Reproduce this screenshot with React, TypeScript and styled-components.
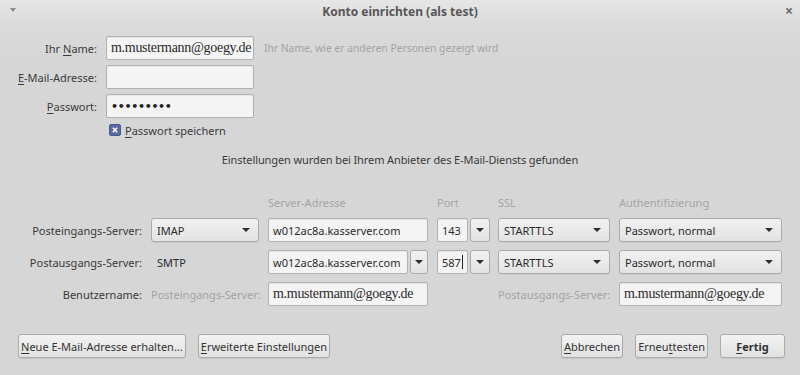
import React from "react";
import styled, { createGlobalStyle } from "styled-components";

const GlobalStyle = createGlobalStyle`
  html, body { margin: 0; padding: 0; }
  body {
    background: #d6d6d6;
    font-family: "Noto Sans", "Open Sans", sans-serif;
    font-size: 11px;
    color: #3a3a3a;
  }
`;

const Window = styled.div`
  width: 800px;
  height: 375px;
  display: flex;
  flex-direction: column;
  background: linear-gradient(#dedede 0px, #d6d6d6 60px, #d6d6d6 100%);
  overflow: hidden;
`;

const TitleBar = styled.div`
  height: 22px;
  display: grid;
  grid-template-columns: 30px 1fr 30px;
  align-items: center;
  background: linear-gradient(#e6e6e6, #dcdcdc);
`;

const MenuTriangle = styled.span`
  justify-self: start;
  margin-left: 10px;
  width: 0;
  height: 0;
  border-left: 3.5px solid transparent;
  border-right: 3.5px solid transparent;
  border-top: 4px solid #8a8a8a;
  margin-top: -2px;
`;

const Title = styled.div`
  text-align: center;
  font-weight: 700;
  font-size: 12px;
  color: #575757;
`;

const CloseX = styled.span`
  justify-self: end;
  margin-right: 7px;
  font-size: 14px;
  font-weight: 700;
  color: #6a6a6a;
  line-height: 1;
`;

const Mn = styled.span`
  text-decoration: underline;
  text-underline-offset: 2px;
`;

const AccountForm = styled.div`
  margin-top: 14px;
  display: grid;
  grid-template-columns: 97px 148px auto;
  column-gap: 9px;
  row-gap: 5px;
  grid-auto-rows: 24px;
  align-items: center;
`;

const Label = styled.div<{ $muted?: boolean }>`
  text-align: right;
  white-space: nowrap;
  color: ${(p) => (p.$muted ? "#a3a3a3" : "#3a3a3a")};
`;

const Field = styled.div<{ $serif?: boolean; $w?: number }>`
  box-sizing: border-box;
  height: 24px;
  ${(p) => (p.$w ? `width: ${p.$w}px; flex: none;` : "")}
  background: #f4f4f4;
  border: 1px solid #b2b2b2;
  border-radius: 2px;
  box-shadow: inset 0 1px 1px rgba(0, 0, 0, 0.06);
  display: flex;
  align-items: center;
  padding: 0 4px;
  white-space: nowrap;
  overflow: hidden;
  font-family: ${(p) =>
    p.$serif
      ? `"Liberation Serif", "DejaVu Serif", serif`
      : `"Noto Sans", "Open Sans", sans-serif`};
  font-size: ${(p) => (p.$serif ? "14px" : "11px")};
  letter-spacing: ${(p) => (p.$serif ? "-0.3px" : "0")};
  color: #2a2a2a;
`;

const Dots = styled.span`
  font-family: "DejaVu Sans", sans-serif;
  font-size: 11px;
  letter-spacing: -0.3px;
  font-weight: 700;
  color: #222;
`;

const Hint = styled.div`
  color: #a3a3a3;
  white-space: nowrap;
  font-size: 10.3px;
  margin-left: 1px;
`;

const CheckRow = styled.div`
  grid-column: 2 / 4;
  display: flex;
  align-items: center;
  gap: 4px;
  margin-left: 3px;
  height: 12px;
  align-self: start;
  margin-top: 1px;
`;

const CheckBox = styled.span`
  box-sizing: border-box;
  width: 12px;
  height: 12px;
  border-radius: 2px;
  background: #5869a3;
  border: 1px solid #4a5a90;
  display: flex;
  align-items: center;
  justify-content: center;
`;

const Message = styled.div`
  margin-top: 5px;
  text-align: center;
  line-height: 16px;
  letter-spacing: -0.1px;
  color: #3a3a3a;
`;

const ServerGrid = styled.div`
  margin-top: 26px;
  display: grid;
  grid-template-columns: 142px 108px 160px 52px 112px 163px;
  column-gap: 9px;
  grid-template-rows: 16px 24px 24px 24px;
  row-gap: 8px;
  align-items: center;
`;

const ColHead = styled.div`
  color: #a5a5a5;
  white-space: nowrap;
`;

const Combo = styled.div`
  box-sizing: border-box;
  height: 24px;
  border: 1px solid #ababab;
  border-radius: 3px;
  background: linear-gradient(#f1f1f1, #e3e3e3);
  box-shadow: 0 1px 0 rgba(0, 0, 0, 0.05);
  display: flex;
  align-items: center;
  justify-content: space-between;
  padding: 0 8px 0 5px;
  color: #2a2a2a;
  white-space: nowrap;
`;

const Arrow = styled.span`
  width: 0;
  height: 0;
  border-left: 4px solid transparent;
  border-right: 4px solid transparent;
  border-top: 4px solid #2e2e2e;
`;

const SplitField = styled.div`
  display: flex;
  gap: 2px;
  height: 24px;
`;

const DropButton = styled.div<{ $w: number }>`
  box-sizing: border-box;
  width: ${(p) => p.$w}px;
  flex: none;
  height: 24px;
  border: 1px solid #ababab;
  border-radius: 3px;
  background: linear-gradient(#f1f1f1, #e3e3e3);
  display: flex;
  align-items: center;
  justify-content: center;
`;

const PlainValue = styled.div`
  padding-left: 6px;
  color: #2a2a2a;
`;

const Caret = styled.span`
  display: inline-block;
  width: 1px;
  height: 14px;
  background: #222;
  margin-left: 1px;
`;

const ButtonBar = styled.div`
  margin-top: auto;
  margin-bottom: 17px;
  padding: 0 15px 0 18px;
  display: flex;
  justify-content: space-between;
`;

const ButtonGroup = styled.div`
  display: flex;
  gap: 12px;
`;

const Button = styled.div<{ $bold?: boolean; $min?: number }>`
  box-sizing: border-box;
  height: 24px;
  padding: 0 2px;
  ${(p) => (p.$min ? `min-width: ${p.$min}px;` : "")}
  border: 1px solid #acacac;
  border-radius: 3px;
  background: linear-gradient(#f3f3f3, #e1e1e1);
  box-shadow: 0 1px 1px rgba(0, 0, 0, 0.08);
  display: flex;
  align-items: center;
  justify-content: center;
  white-space: nowrap;
  font-weight: ${(p) => (p.$bold ? 700 : 400)};
  color: #333;
`;

export default function App() {
  return (
    <>
      <GlobalStyle />
      <Window>
        <TitleBar>
          <MenuTriangle />
          <Title>Konto einrichten (als test)</Title>
          <CloseX>×</CloseX>
        </TitleBar>

        <AccountForm>
          <Label>
            Ihr <Mn>N</Mn>ame:
          </Label>
          <Field $serif>m.mustermann@goegy.de</Field>
          <Hint>Ihr Name, wie er anderen Personen gezeigt wird</Hint>

          <Label>
            <Mn>E</Mn>-Mail-Adresse:
          </Label>
          <Field />
          <span />

          <Label>
            <Mn>P</Mn>asswort:
          </Label>
          <Field>
            <Dots>•••••••••</Dots>
          </Field>
          <span />

          <span />
          <CheckRow>
            <CheckBox>
              <svg width="6" height="6" viewBox="0 0 6 6">
                <path d="M0.8 0.8 L5.2 5.2 M5.2 0.8 L0.8 5.2" stroke="#fff" strokeWidth="1.5" />
              </svg>
            </CheckBox>
            <span>
              <Mn>P</Mn>asswort speichern
            </span>
          </CheckRow>
        </AccountForm>

        <Message>Einstellungen wurden bei Ihrem Anbieter des E-Mail-Diensts gefunden</Message>

        <ServerGrid>
          <span />
          <span />
          <ColHead>Server-Adresse</ColHead>
          <ColHead>Port</ColHead>
          <ColHead>SSL</ColHead>
          <ColHead>Authentifizierung</ColHead>

          <Label>Posteingangs-Server:</Label>
          <Combo>
            IMAP
            <Arrow />
          </Combo>
          <Field>w012ac8a.kasserver.com</Field>
          <SplitField>
            <Field $w={31}>143</Field>
            <DropButton $w={20}>
              <Arrow />
            </DropButton>
          </SplitField>
          <Combo>
            STARTTLS
            <Arrow />
          </Combo>
          <Combo>
            Passwort, normal
            <Arrow />
          </Combo>

          <Label>Postausgangs-Server:</Label>
          <PlainValue>SMTP</PlainValue>
          <SplitField>
            <Field $w={140}>w012ac8a.kasserver.com</Field>
            <DropButton $w={18}>
              <Arrow />
            </DropButton>
          </SplitField>
          <SplitField>
            <Field $w={31}>
              587
              <Caret />
            </Field>
            <DropButton $w={20}>
              <Arrow />
            </DropButton>
          </SplitField>
          <Combo>
            STARTTLS
            <Arrow />
          </Combo>
          <Combo>
            Passwort, normal
            <Arrow />
          </Combo>

          <Label>Benutzername:</Label>
          <Label $muted>Posteingangs-Server:</Label>
          <Field $serif>m.mustermann@goegy.de</Field>
          <span />
          <Label $muted>Postausgangs-Server:</Label>
          <Field $serif>m.mustermann@goegy.de</Field>
        </ServerGrid>

        <ButtonBar>
          <ButtonGroup>
            <Button>
              <Mn>N</Mn>eue E-Mail-Adresse erhalten...
            </Button>
            <Button>
              <Mn>E</Mn>rweiterte Einstellungen
            </Button>
          </ButtonGroup>
          <ButtonGroup>
            <Button>
              <Mn>A</Mn>bbrechen
            </Button>
            <Button>
              Erneu<Mn>t</Mn>{" "}testen
            </Button>
            <Button $bold $min={65}>
              <Mn>F</Mn>ertig
            </Button>
          </ButtonGroup>
        </ButtonBar>
      </Window>
    </>
  );
}
